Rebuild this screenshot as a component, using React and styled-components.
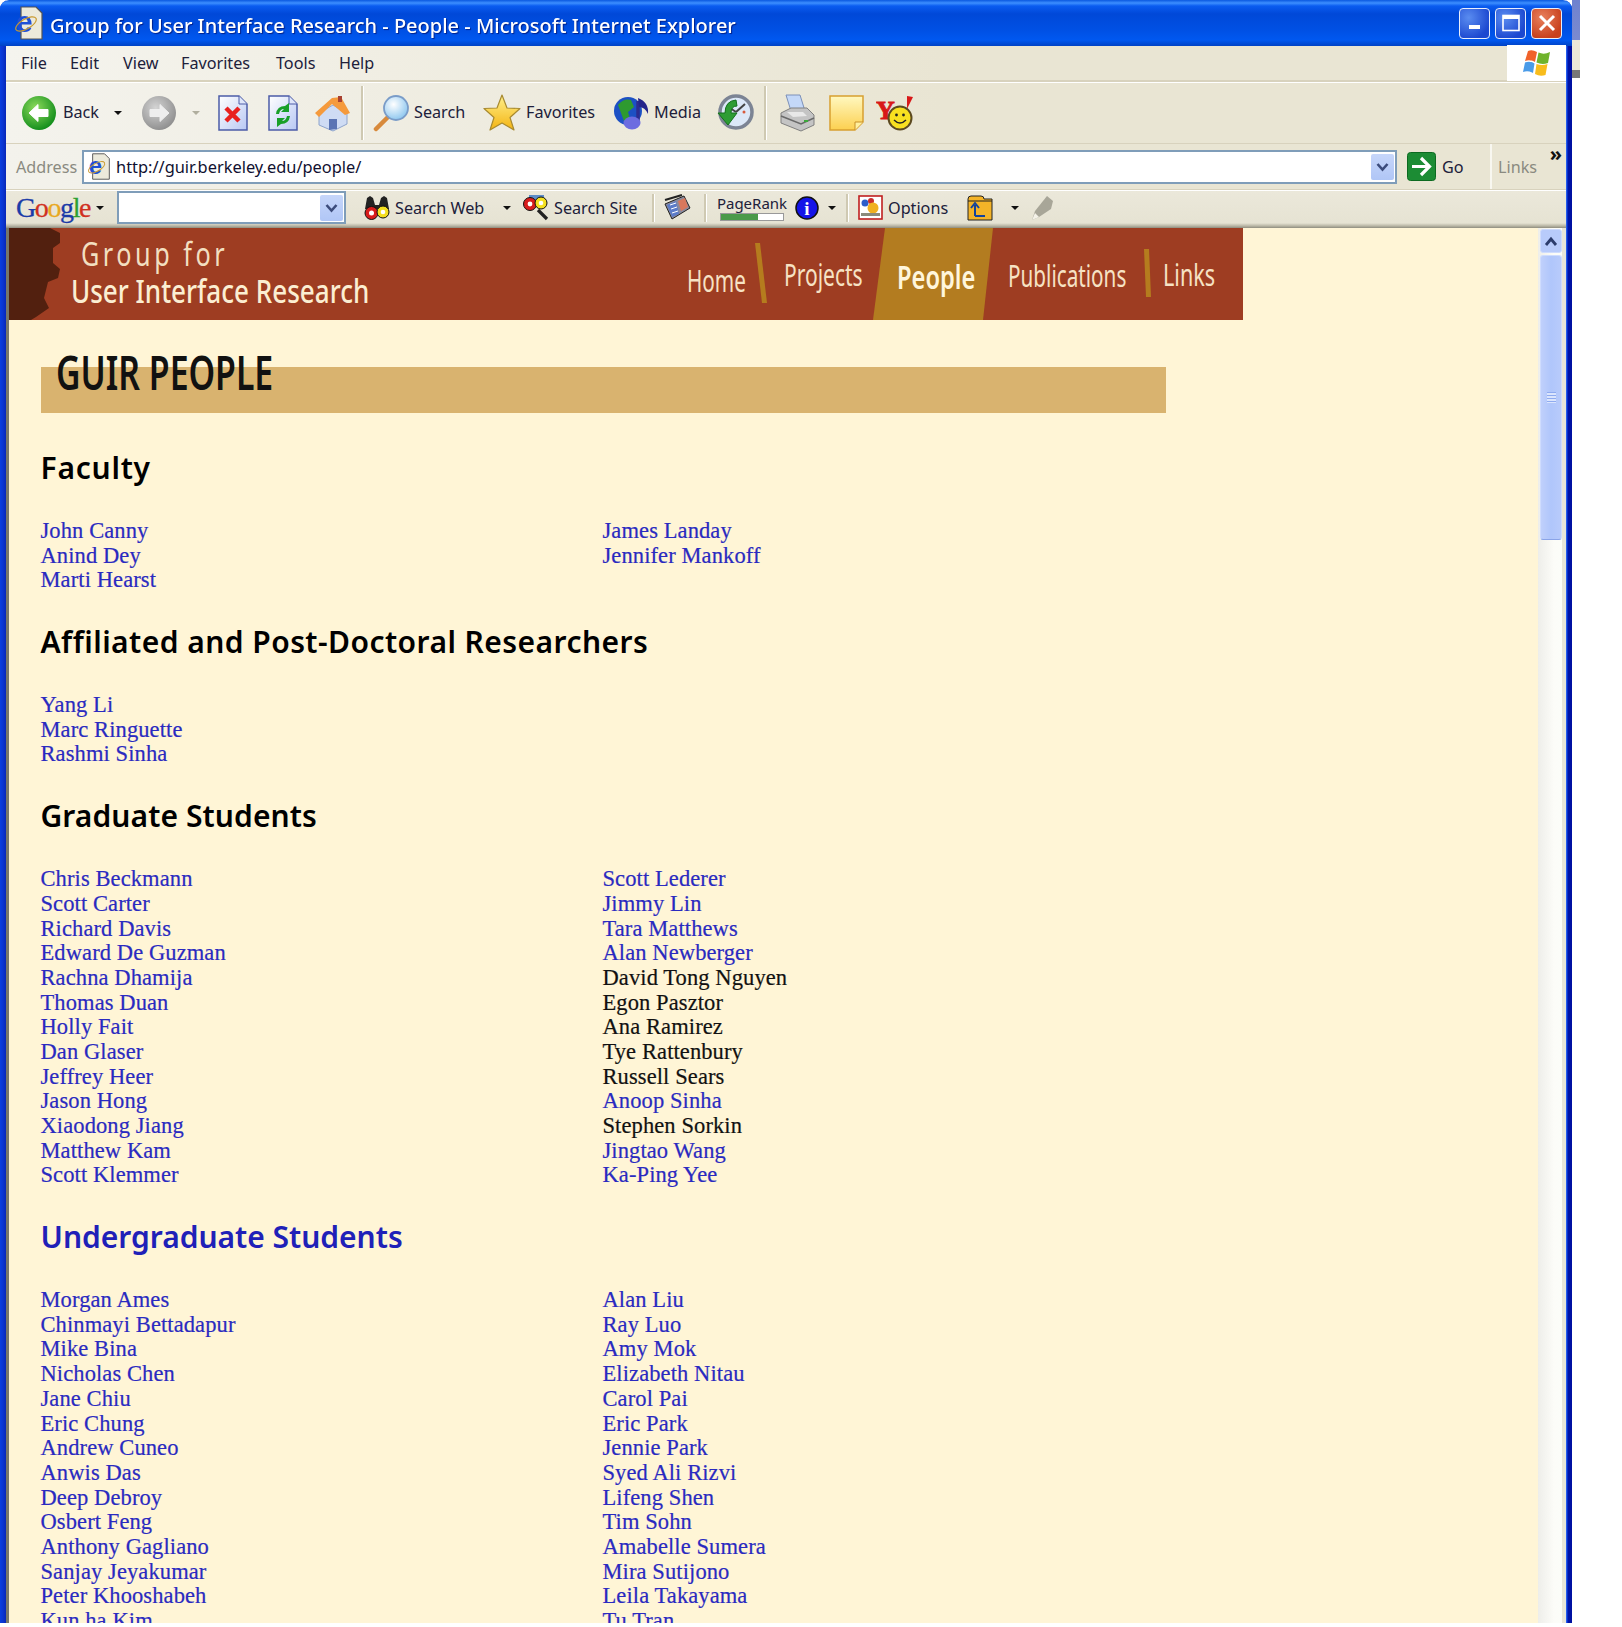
import React from 'react'
import styled, { createGlobalStyle } from 'styled-components'

const GlobalStyle = createGlobalStyle`
  html, body { margin: 0; padding: 0; background: #fff; }
`

const UI_FONT = '"Noto Sans", "Open Sans", sans-serif'

const faculty = [
  ['John Canny', 'Anind Dey', 'Marti Hearst'],
  ['James Landay', 'Jennifer Mankoff'],
]
const affiliated = [['Yang Li', 'Marc Ringuette', 'Rashmi Sinha'], []]
const graduates = [
  ['Chris Beckmann', 'Scott Carter', 'Richard Davis', 'Edward De Guzman', 'Rachna Dhamija', 'Thomas Duan', 'Holly Fait', 'Dan Glaser', 'Jeffrey Heer', 'Jason Hong', 'Xiaodong Jiang', 'Matthew Kam', 'Scott Klemmer'],
  ['Scott Lederer', 'Jimmy Lin', 'Tara Matthews', 'Alan Newberger', 'David Tong Nguyen', 'Egon Pasztor', 'Ana Ramirez', 'Tye Rattenbury', 'Russell Sears', 'Anoop Sinha', 'Stephen Sorkin', 'Jingtao Wang', 'Ka-Ping Yee'],
]
const undergrads = [
  ['Morgan Ames', 'Chinmayi Bettadapur', 'Mike Bina', 'Nicholas Chen', 'Jane Chiu', 'Eric Chung', 'Andrew Cuneo', 'Anwis Das', 'Deep Debroy', 'Osbert Feng', 'Anthony Gagliano', 'Sanjay Jeyakumar', 'Peter Khooshabeh', 'Kun ha Kim'],
  ['Alan Liu', 'Ray Luo', 'Amy Mok', 'Elizabeth Nitau', 'Carol Pai', 'Eric Park', 'Jennie Park', 'Syed Ali Rizvi', 'Lifeng Shen', 'Tim Sohn', 'Amabelle Sumera', 'Mira Sutijono', 'Leila Takayama', 'Tu Tran'],
]
// people without a home page are plain text on the real page
const noLink = ['David Tong Nguyen', 'Egon Pasztor', 'Ana Ramirez', 'Tye Rattenbury', 'Russell Sears', 'Stephen Sorkin']

const Desktop = styled.div`
  width: 1622px;
  height: 1627px;
  display: flex;
  align-items: flex-start;
  overflow: hidden;
  background: #fff;
`
const Window = styled.div`
  width: 1572px;
  height: 1623px;
  display: flex;
  flex-direction: column;
  overflow: hidden;
  border-radius: 9px 9px 0 0;
  filter: blur(0.45px);
  background:
    linear-gradient(90deg, #0a3fe0 0, #0a35d0 3px, #0828b8 6px, transparent 6px),
    linear-gradient(270deg, #0010a0 0, #0014a8 4px, #1048e8 5px, #3a70f0 6px, transparent 6px);
`
const Sliver = styled.div`
  width: 8px;
  height: 80px;
  background: linear-gradient(180deg, #6f82cf 0, #7a8ad0 40px, #ece9d8 40px, #ece9d8 70px, #777 70px, #777 78px, #fff 78px);
`
const TitleBar = styled.div`
  height: 46px;
  flex: none;
  display: flex;
  align-items: center;
  padding-left: 15px;
  background: linear-gradient(180deg, #0a58e0 0, #3d8fff 3px, #0a5cf0 6px, #0048d8 14px, #0050e4 30px, #0058f0 40px, #0042c4 46px);
`
const TitleText = styled.span`
  margin: 4px 0 0 7px;
  font: 500 20px ${UI_FONT};
  color: #fff;
  white-space: nowrap;
  text-shadow: 1px 1px 1px #00208a;
`
const WinButtons = styled.div`
  margin-left: auto;
  margin-right: 10px;
  display: flex;
  gap: 5px;
`
const WinButton = styled.div`
  width: 31px;
  height: 31px;
  box-sizing: border-box;
  border: 1.5px solid #e8eefc;
  border-radius: 4px;
  display: flex;
  align-items: center;
  justify-content: center;
  background: ${p => p.$close
    ? 'radial-gradient(circle at 35% 30%, #e8805c, #c8401c 75%)'
    : 'radial-gradient(circle at 30% 30%, #5a8cf0, #1c48d0 75%)'};
`
const Chrome = styled.div`
  flex: 1;
  min-height: 0;
  margin: 0 6px;
  display: flex;
  flex-direction: column;
`
const MenuBar = styled.div`
  height: 34px;
  flex: none;
  display: flex;
  align-items: center;
  border-bottom: 2px solid #d8d2bd;
  background: linear-gradient(90deg, #f5f4ee, #e9e5d3 60%);
`
const MenuItems = styled.div`
  flex: 1;
  display: flex;
  padding-left: 15px;
`
const MenuItem = styled.span`
  width: ${p => p.$w}px;
  font: 16.2px ${UI_FONT};
  color: #20203a;
`
const FlagBox = styled.div`
  width: 59px;
  height: 36px;
  display: flex;
  align-items: center;
  justify-content: center;
  background: #fff;
`
const ToolBar = styled.div`
  height: 60px;
  flex: none;
  display: flex;
  align-items: center;
  border-top: 1px solid #fff;
  border-bottom: 1px solid #d8d2bd;
  background: linear-gradient(90deg, #f4f3ed, #e9e5d3 60%);
`
const Slot = styled.div`
  flex: none;
  margin-left: ${p => p.$ml || 0}px;
  display: flex;
  align-items: center;
`
const Label = styled.span`
  flex: none;
  width: ${p => p.$w}px;
  margin-left: ${p => p.$ml || 0}px;
  font: ${p => p.$size || 16.2}px ${UI_FONT};
  color: ${p => p.$color || '#20203a'};
  white-space: nowrap;
`
const ToolLabel = styled(Label)`
  margin-bottom: 3px;
`
const Caret = styled.span`
  flex: none;
  width: 0;
  height: 0;
  margin-left: ${p => p.$ml || 0}px;
  border-left: 4px solid transparent;
  border-right: 4px solid transparent;
  border-top: 4px solid ${p => p.$off ? '#b0ae9e' : '#111'};
`
const Separator = styled.span`
  flex: none;
  width: 2px;
  height: ${p => p.$h}px;
  margin-left: ${p => p.$ml || 0}px;
  background: #cfc9b2;
  border-right: 1px solid #fff;
`
const AddressBar = styled.div`
  height: 45px;
  flex: none;
  display: flex;
  align-items: center;
  border-bottom: 1px solid #d8d2bd;
  background: linear-gradient(90deg, #f3f2ec, #e9e5d3 60%);
`
const Field = styled.div`
  flex: none;
  width: ${p => p.$w}px;
  height: ${p => p.$h}px;
  margin-left: ${p => p.$ml || 0}px;
  box-sizing: border-box;
  display: flex;
  align-items: center;
  border: 2px solid #7f9db9;
  background: #fff;
`
const FieldText = styled.span`
  margin-left: 5px;
  font: 16.4px ${UI_FONT};
  color: #101030;
`
const DropButton = styled.div`
  margin-left: auto;
  margin-right: 1px;
  width: 23px;
  height: 26px;
  display: flex;
  align-items: center;
  justify-content: center;
  border-radius: 2px;
  background: linear-gradient(180deg, #c6d6fa, #b0c6f6);
`
const LinksBox = styled.div`
  position: relative;
  flex: 1;
  align-self: stretch;
  margin-left: 24px;
  display: flex;
  align-items: center;
  border-left: 2px solid #f8f7f0;
`
const More = styled.span`
  position: absolute;
  top: -4px;
  right: 4px;
  font: 700 20px ${UI_FONT};
  color: #111;
`
const GoogleBar = styled.div`
  height: 38px;
  flex: none;
  display: flex;
  align-items: center;
  padding-bottom: 4px;
  box-sizing: border-box;
  border-top: 1px solid #fff;
  background: linear-gradient(180deg, #ebe8da 0, #e6e3d3 32px, #b8b5a4 35px, #8e8c7e 37px);
`
const GoogleLogo = styled.span`
  flex: none;
  width: 74px;
  margin-left: 10px;
  font: 28px "Liberation Serif", serif;
  letter-spacing: -1.4px;
  -webkit-text-stroke: 0.3px;
`
const Letter = styled.span`
  color: ${p => p.$c};
`
const RankBox = styled.div`
  flex: none;
  width: 68px;
  margin-left: ${p => p.$ml}px;
  display: flex;
  flex-direction: column;
  align-items: center;
  gap: 1px;
`
const RankText = styled.span`
  font: 15px/17px ${UI_FONT};
  color: #20203a;
`
const RankBar = styled.div`
  width: 62px;
  height: 6px;
  border: 1px solid #999;
  background: linear-gradient(90deg, #4a9a4a 60%, #fff 60%);
`
const Page = styled.div`
  flex: 1;
  min-height: 0;
  display: flex;
  border-left: 3px solid #77776a;
  background: #fff5d6;
`
const Content = styled.div`
  flex: 1;
  min-width: 0;
  overflow: hidden;
`
const Banner = styled.div`
  width: 1234px;
  height: 92px;
  display: flex;
  background: #9e3d22;
`
const Brand = styled.div`
  margin-left: 11px;
  display: flex;
  flex-direction: column;
`
const Squeeze = styled.span`
  display: inline-block;
  white-space: nowrap;
  transform-origin: left center;
  transform: scaleX(${p => p.$x});
`
const BrandTop = styled.div`
  margin: 9px 0 0 10px;
  height: 34px;
  font: 33px/34px ${UI_FONT};
  letter-spacing: 4.6px;
  color: #f2dfc0;
`
const BrandBottom = styled.div`
  height: 40px;
  font: 500 33px/40px ${UI_FONT};
  color: #fbeed2;
`
const Nav = styled.nav`
  margin-left: auto;
  margin-right: 29px;
  display: flex;
  align-items: flex-start;
`
const NavItem = styled.div`
  flex: none;
  width: ${p => p.$w}px;
  margin: ${p => p.$top}px 0 0 ${p => p.$ml}px;
  font: 30px/36px ${UI_FONT};
  color: #f6e2c4;
`
const Slash = styled.div`
  flex: none;
  width: ${p => p.$w}px;
  height: ${p => p.$h}px;
  margin: ${p => p.$top}px 0 0 ${p => p.$ml}px;
  background: #b57c1e;
  clip-path: polygon(0 0, ${p => p.$tw}px 0, 100% 100%, ${p => p.$bx}px 100%);
`
const PeopleTab = styled.div`
  flex: none;
  width: 120px;
  height: 92px;
  margin-left: 11px;
  padding: 31px 0 0 24px;
  box-sizing: border-box;
  font: 600 32px/36px ${UI_FONT};
  color: #fff6dc;
  background: #b37c20;
  clip-path: polygon(12px 0, 100% 0, 110px 100%, 0 100%);
`
const PageTitle = styled.div`
  width: 1125px;
  height: 46px;
  margin: 47px 0 0 32px;
  background: #d9b36f;
`
const PageTitleText = styled.h1`
  margin: 0 0 0 15px;
  position: relative;
  top: -22px;
  font: 600 46px/54px ${UI_FONT};
  color: #111;
`
const Section = styled.section`
  margin: ${p => p.$first ? 35 : 29}px 0 0 31.5px;
`
const Heading = styled.h2`
  margin: 0 0 31px;
  font: 600 30px/40px ${UI_FONT};
  letter-spacing: ${p => p.$ls}px;
  color: ${p => p.$link ? '#2020b8' : '#000'};
`
const Columns = styled.div`
  display: grid;
  grid-template-columns: 562px 1fr;
`
const Names = styled.div`
  display: flex;
  flex-direction: column;
`
const Person = styled.div`
  height: 24.7px;
  font: 22.5px/24.7px "Liberation Serif", serif;
  letter-spacing: 0.1px;
  -webkit-text-stroke: 0.2px;
  white-space: nowrap;
  color: #111;
`
const PersonLink = styled.a`
  color: #2a2ac0;
  text-decoration: none;
`
const ScrollBar = styled.div`
  width: 28px;
  flex: none;
  box-sizing: border-box;
  padding: 1px 0 0 2px;
  display: flex;
  flex-direction: column;
  background: linear-gradient(90deg, #eeeeea 0, #fcfcf8 16px, #fcfdf9 24px, #e8e6d8 24px);
`
const ScrollUp = styled.div`
  width: 22px;
  height: 24px;
  display: flex;
  align-items: center;
  justify-content: center;
  border-radius: 3px;
  border: 1px solid #cfdcfd;
  box-sizing: border-box;
  background: #b8cbfb;
`
const Thumb = styled.div`
  width: 22px;
  height: 285px;
  margin-top: 2px;
  box-sizing: border-box;
  display: flex;
  align-items: center;
  justify-content: center;
  border-radius: 3px;
  border: 1px solid #cfdcfd;
  border-bottom-color: #8aa4e8;
  background: linear-gradient(90deg, #c0d0fb, #b0c6fb 50%, #b8cbfb);
`
const Grip = styled.div`
  width: 9px;
  height: 11px;
  background: repeating-linear-gradient(180deg, #8fabf0 0, #8fabf0 1px, #dbe5fd 1px, #dbe5fd 3px);
`

function RoundArrow({ id, light, dark, arrow, flip }) {
  return (
    <svg width="36" height="36" viewBox="0 0 36 36">
      <defs>
        <radialGradient id={id} cx="40%" cy="35%" r="70%">
          <stop offset="0" stopColor={light} />
          <stop offset="1" stopColor={dark} />
        </radialGradient>
      </defs>
      <circle cx="18" cy="18" r="17" fill={`url(#${id})`} />
      <path
        transform={flip ? 'translate(36 0) scale(-1 1)' : undefined}
        d="M8 18 L17 9.5 V14.5 H27 V21.5 H17 V26.5 Z"
        fill={arrow}
        stroke={arrow}
        strokeLinejoin="round"
      />
    </svg>
  )
}

function Doc({ id, w = 30, h = 36, children }) {
  return (
    <svg width={w} height={h} viewBox="0 0 30 36">
      <defs>
        <linearGradient id={id} x1="0" y1="0" x2="1" y2="1">
          <stop offset="0" stopColor="#ffffff" />
          <stop offset="1" stopColor="#b8c8f4" />
        </linearGradient>
      </defs>
      <path d="M1 1 H21 L29 9 V35 H1 Z" fill={`url(#${id})`} stroke="#4c5ca8" strokeWidth="1.5" />
      <path d="M21 1 V9 H29" fill="#dfe6fa" stroke="#4c5ca8" />
      {children}
    </svg>
  )
}

function IeDoc({ w, h }) {
  return (
    <svg width={w} height={h} viewBox="0 0 28 34">
      <path d="M6 1 H21 L27 7 V33 H6 Z" fill="#eceadb" stroke="#555" strokeWidth="1.2" />
      <text x="1" y="26" fontFamily="Liberation Sans" fontWeight="700" fontSize="30" fill="#1e50d8">e</text>
      <ellipse cx="11" cy="18" rx="11.5" ry="5" fill="none" stroke="#c89a30" strokeWidth="1.2" transform="rotate(-30 11 18)" />
    </svg>
  )
}

function Flag() {
  return (
    <svg width="30" height="30" viewBox="0 0 30 30">
      <path d="M6 3 Q10 1 15 4 L13 14 Q8 11 3 13 Z" fill="#f0622a" />
      <path d="M16.5 4.5 Q22 7 28 4 L26 15 Q20 17 14.5 14.5 Z" fill="#6fb32c" />
      <path d="M3 14.5 Q8 12.5 12.5 15.5 L11 25 Q6 22 1 24 Z" fill="#4a9be8" />
      <path d="M14.5 16 Q20 18 25.5 16 L23.5 27 Q18 29 13 26 Z" fill="#f8bc1c" />
    </svg>
  )
}

function Home() {
  return (
    <svg width="37" height="37" viewBox="0 0 37 37">
      <path d="M5 18 L19 10 L33 18 V29 L19 36 L5 30 Z" fill="#cfdcf4" stroke="#8ea4cc" />
      <path d="M15 35 V24 H23 V34 Z" fill="#5a74b4" />
      <path d="M1 18 L18 3 L27 2 L36 18 L31 20 L18 9 L5 22 Z" fill="#f59a3c" />
      <rect x="24" y="1" width="4" height="6" fill="#a84030" />
    </svg>
  )
}

function SearchGlass() {
  return (
    <svg width="37" height="37" viewBox="0 0 37 37">
      <defs>
        <radialGradient id="lens" cx="40%" cy="35%" r="70%">
          <stop offset="0" stopColor="#ffffff" />
          <stop offset="1" stopColor="#88c4ee" />
        </radialGradient>
      </defs>
      <path d="M14 23 L3 34" stroke="#d88a3c" strokeWidth="4.5" strokeLinecap="round" />
      <circle cx="23" cy="13" r="12" fill="url(#lens)" stroke="#7a9cc8" strokeWidth="1.8" />
    </svg>
  )
}

function Star() {
  return (
    <svg width="38" height="38" viewBox="0 0 38 38">
      <defs>
        <linearGradient id="star" x1="0" y1="0" x2="0" y2="1">
          <stop offset="0" stopColor="#fff08c" />
          <stop offset="1" stopColor="#f4b412" />
        </linearGradient>
      </defs>
      <path d="M19 1 L24 14 L37 14.5 L27 23.5 L31 36 L19 29 L7 36 L11 23.5 L1 14.5 L14 14 Z" fill="url(#star)" stroke="#a88a30" strokeWidth="1.2" strokeLinejoin="round" />
    </svg>
  )
}

function Media() {
  return (
    <svg width="36" height="36" viewBox="0 0 36 36">
      <circle cx="14" cy="16" r="14" fill="#1c50c4" />
      <path d="M4 10 Q10 3 17 5 L20 12 L14 17 L16 24 L10 26 L7 18 Z" fill="#2e9a30" />
      <path d="M24 6 V27" stroke="#2c2c90" strokeWidth="3.5" />
      <path d="M24 3 Q35 7 34 19 Q31 12 25 12 Z" fill="#24248a" />
      <ellipse cx="18" cy="28" rx="8.5" ry="6.5" fill="#6c6ce0" />
    </svg>
  )
}

function History() {
  return (
    <svg width="38" height="38" viewBox="0 0 38 38">
      <circle cx="20" cy="18" r="16" fill="#dce8f8" stroke="#7c8494" strokeWidth="3.5" />
      <path d="M20 18 L29 10 M20 18 L14 14" stroke="#444" strokeWidth="2" />
      <circle cx="28" cy="18" r="1.5" fill="#d85a3c" />
      <path d="M20 6 Q9 7 9 19 H2 L12 31 L21 19 H15 Q15 12 21 12 Z" fill="#2e9c34" stroke="#14701c" />
    </svg>
  )
}

function Printer() {
  return (
    <svg width="37" height="38" viewBox="0 0 37 38">
      <path d="M7 1 H21 L26 17 H12 Z" fill="#c4d8f8" stroke="#7c90b8" />
      <path d="M2 19 L12 14 H28 L35 21 V31 L22 37 L2 29 Z" fill="#c4c4c4" stroke="#808080" />
      <path d="M2 22 L22 30 L35 24" fill="none" stroke="#6a6a6a" strokeWidth="1.6" />
      <path d="M8 18 L24 18 L28 22 L14 23 Z" fill="#e8e8e8" />
      <rect x="25" y="26" width="4" height="2" fill="#3ca83c" />
    </svg>
  )
}

function Note() {
  return (
    <svg width="35" height="36" viewBox="0 0 35 36">
      <defs>
        <linearGradient id="note" x1="0" y1="0" x2="0" y2="1">
          <stop offset="0" stopColor="#fff8c0" />
          <stop offset="1" stopColor="#fcd050" />
        </linearGradient>
      </defs>
      <path d="M1 1 H34 V27 L26 35 H1 Z" fill="url(#note)" stroke="#d8a030" strokeWidth="1.5" />
      <path d="M26 35 V27 H34" fill="#fff0a0" stroke="#c89028" />
    </svg>
  )
}

function YahooFace() {
  return (
    <svg width="38" height="36" viewBox="0 0 38 36">
      <text x="0" y="24" fontFamily="Liberation Serif" fontWeight="700" fontSize="26" fill="#d81818" stroke="#d81818" strokeWidth="0.9">Y</text>
      <path d="M31 1 L37 2 L31 14 Z" fill="#d81818" />
      <circle cx="24" cy="23" r="11.5" fill="#f8e020" stroke="#5c4a20" strokeWidth="2" />
      <circle cx="20.5" cy="20" r="1.4" fill="#222" />
      <circle cx="27.5" cy="20" r="1.4" fill="#222" />
      <path d="M18 25 Q24 31 30 25" fill="none" stroke="#222" strokeWidth="1.4" />
    </svg>
  )
}

function GoArrow() {
  return (
    <svg width="29" height="29" viewBox="0 0 29 29">
      <rect x="0.5" y="0.5" width="28" height="28" rx="3" fill="#1c8c34" stroke="#0c6a20" />
      <path d="M5 14.5 H21 M14 6 L22.5 14.5 L14 23" fill="none" stroke="#fff" strokeWidth="3.2" />
    </svg>
  )
}

function Chevron() {
  return (
    <svg width="13" height="10" viewBox="0 0 13 10">
      <path d="M1.5 2 L6.5 7.5 L11.5 2" fill="none" stroke="#3c4c7c" strokeWidth="2.6" />
    </svg>
  )
}

function Binoculars() {
  return (
    <svg width="26" height="26" viewBox="0 0 26 26">
      <path d="M3 3 L6 1 L9 3 L11 10 H15 L17 3 L20 1 L23 3 L25 14 H1 Z" fill="#222" />
      <circle cx="7.5" cy="18" r="6.5" fill="#d81c1c" stroke="#111" />
      <circle cx="7.5" cy="18" r="2.5" fill="#fff" />
      <circle cx="19" cy="17" r="6" fill="#f4e020" stroke="#111" />
      <circle cx="19" cy="17" r="2.3" fill="#fff" />
    </svg>
  )
}

function SiteSearch() {
  return (
    <svg width="27" height="27" viewBox="0 0 27 27">
      <rect x="6" y="1" width="15" height="8" fill="#5c8cc8" />
      <circle cx="7" cy="10" r="6.5" fill="#d81c1c" stroke="#111" />
      <circle cx="7" cy="10" r="2.4" fill="#fff" />
      <circle cx="18" cy="9" r="6" fill="#f4e020" stroke="#111" />
      <circle cx="18" cy="9" r="2.3" fill="#fff" />
      <path d="M15 16 L24 25" stroke="#222" strokeWidth="3.2" />
    </svg>
  )
}

function NewsBook() {
  return (
    <svg width="27" height="27" viewBox="0 0 27 27">
      <path d="M1 10 L20 2 L26 14 L8 25 Z" fill="#8a8a9c" stroke="#222" />
      <path d="M3 11 L12 7 L15 20 L8 23 Z" fill="#5c7cc8" />
      <path d="M14 7 L21 4 L24 13 L17 17 Z" fill="#d8785c" />
      <path d="M6 11 L12 9 M7 15 L13 13 M8 19 L14 17" stroke="#fff" />
      <path d="M1 6 L18 1" stroke="#222" strokeWidth="2" />
    </svg>
  )
}

function InfoBadge() {
  return (
    <svg width="24" height="24" viewBox="0 0 24 24">
      <circle cx="12" cy="12" r="11" fill="#1414e8" stroke="#111" strokeWidth="1.5" />
      <text x="12" y="19" textAnchor="middle" fontFamily="Liberation Serif" fontWeight="700" fontSize="19" fill="#fff">i</text>
    </svg>
  )
}

function OptionsBox() {
  return (
    <svg width="25" height="25" viewBox="0 0 25 25">
      <rect x="1" y="1" width="23" height="23" fill="#fff" stroke="#c02020" strokeWidth="1.6" />
      <circle cx="7" cy="8" r="3.5" fill="#2c5cc8" />
      <circle cx="13" cy="6" r="3" fill="#c82c2c" />
      <circle cx="15" cy="13" r="5.5" fill="#f0b020" />
      <rect x="3" y="18" width="19" height="3" fill="#8a8a7c" />
    </svg>
  )
}

function UpFolder() {
  return (
    <svg width="26" height="26" viewBox="0 0 26 26">
      <path d="M1 4 Q1 1 4 1 H14 Q17 1 17 4 H25 V25 H1 Z" fill="#f4b428" stroke="#222" />
      <path d="M1 6 H25" stroke="#222" />
      <path d="M8 21 V10 M4 13 L8 8 L12 13 M8 21 H18" fill="none" stroke="#14449c" strokeWidth="2" />
    </svg>
  )
}

function Pen() {
  return (
    <svg width="24" height="26" viewBox="0 0 24 26">
      <path d="M17 1 L23 6 L21 14 L9 22 L2 25 L5 16 Z" fill="#a8a698" />
      <path d="M2 25 L9 22 L5 18 Z" fill="#f4f2e8" />
    </svg>
  )
}

function PersonList({ names }) {
  return (
    <Names>
      {names.map(name => (
        <Person key={name}>
          {noLink.includes(name) ? name : <PersonLink href="#">{name}</PersonLink>}
        </Person>
      ))}
    </Names>
  )
}

function PeopleSection({ title, columns, first, link, ls }) {
  return (
    <Section $first={first}>
      <Heading $link={link} $ls={ls}>{title}</Heading>
      <Columns>
        <PersonList names={columns[0]} />
        <PersonList names={columns[1]} />
      </Columns>
    </Section>
  )
}

export default function App() {
  return (
    <>
      <GlobalStyle />
      <Desktop>
        <Window>
          <TitleBar>
            <IeDoc w={28} h={34} />
            <TitleText>Group for User Interface Research - People - Microsoft Internet Explorer</TitleText>
            <WinButtons>
              <WinButton>
                <svg width="16" height="16" viewBox="0 0 16 16"><rect x="2" y="10" width="11" height="4" fill="#fff" /></svg>
              </WinButton>
              <WinButton>
                <svg width="18" height="18" viewBox="0 0 18 18"><rect x="1" y="1.5" width="16" height="15" fill="none" stroke="#fff" strokeWidth="1.6" /><rect x="1" y="1" width="16" height="4" fill="#fff" /></svg>
              </WinButton>
              <WinButton $close>
                <svg width="18" height="18" viewBox="0 0 18 18"><path d="M2 2 L16 16 M16 2 L2 16" stroke="#fff" strokeWidth="3" /></svg>
              </WinButton>
            </WinButtons>
          </TitleBar>

          <Chrome>
            <MenuBar>
              <MenuItems>
                <MenuItem $w={49}>File</MenuItem>
                <MenuItem $w={53}>Edit</MenuItem>
                <MenuItem $w={58}>View</MenuItem>
                <MenuItem $w={95}>Favorites</MenuItem>
                <MenuItem $w={63}>Tools</MenuItem>
                <MenuItem $w={50}>Help</MenuItem>
              </MenuItems>
              <FlagBox><Flag /></FlagBox>
            </MenuBar>

            <ToolBar>
              <Slot $ml={15}><RoundArrow id="back" light="#8edb5c" dark="#0c8a18" arrow="#fff" /></Slot>
              <ToolLabel $ml={6} $w={36}>Back</ToolLabel>
              <Caret $ml={15} />
              <Slot $ml={19}><RoundArrow id="fwd" light="#d4d4d4" dark="#8c8c8c" arrow="#eee" flip /></Slot>
              <Caret $ml={15} $off />
              <Slot $ml={18}>
                <Doc id="stop">
                  <path d="M8 13 L21 26 M21 13 L8 26" stroke="#e82020" strokeWidth="4.5" />
                </Doc>
              </Slot>
              <Slot $ml={20}>
                <Doc id="refresh">
                  <path d="M8 19 Q9 11 17 11 L21 8 V17 H13 L16 14 Q12 14 11 19 Z M22 21 Q21 29 13 29 L9 32 V23 H17 L14 26 Q18 26 19 21 Z" fill="#18a028" />
                </Doc>
              </Slot>
              <Slot $ml={16}><Home /></Slot>
              <Separator $ml={10} $h={54} />
              <Slot $ml={9}><SearchGlass /></Slot>
              <ToolLabel $ml={4} $w={50}>Search</ToolLabel>
              <Slot $ml={19}><Star /></Slot>
              <ToolLabel $ml={5} $w={70}>Favorites</ToolLabel>
              <Slot $ml={18}><Media /></Slot>
              <ToolLabel $ml={4} $w={44}>Media</ToolLabel>
              <Slot $ml={18}><History /></Slot>
              <Separator $ml={10} $h={54} />
              <Slot $ml={12}><Printer /></Slot>
              <Slot $ml={13}><Note /></Slot>
              <Slot $ml={12}><YahooFace /></Slot>
            </ToolBar>

            <AddressBar>
              <Label $ml={10} $w={60} $color="#8a8a80">Address</Label>
              <Field $ml={6} $w={1315} $h={34}>
                <Slot $ml={3}><IeDoc w={24} h={27} /></Slot>
                <FieldText>http://guir.berkeley.edu/people/</FieldText>
                <DropButton><Chevron /></DropButton>
              </Field>
              <Slot $ml={10}><GoArrow /></Slot>
              <Label $ml={6} $w={24}>Go</Label>
              <LinksBox>
                <Label $ml={6} $w={36} $color="#8a8a80">Links</Label>
                <More>»</More>
              </LinksBox>
            </AddressBar>

            <GoogleBar>
              <GoogleLogo>
                <Letter $c="#1c3ca8">G</Letter>
                <Letter $c="#d03020">o</Letter>
                <Letter $c="#e8a820">o</Letter>
                <Letter $c="#1c3ca8">g</Letter>
                <Letter $c="#30a030">l</Letter>
                <Letter $c="#d03020">e</Letter>
              </GoogleLogo>
              <Caret $ml={6} />
              <Field $ml={13} $w={229} $h={33}>
                <DropButton><Chevron /></DropButton>
              </Field>
              <Slot $ml={18}><Binoculars /></Slot>
              <Label $ml={5} $w={86}>Search Web</Label>
              <Caret $ml={22} />
              <Slot $ml={12}><SiteSearch /></Slot>
              <Label $ml={4} $w={84}>Search Site</Label>
              <Separator $ml={14} $h={28} />
              <Slot $ml={9}><NewsBook /></Slot>
              <Separator $ml={13} $h={28} />
              <RankBox $ml={11}>
                <RankText>PageRank</RankText>
                <RankBar />
              </RankBox>
              <Slot $ml={9}><InfoBadge /></Slot>
              <Caret $ml={9} />
              <Separator $ml={10} $h={28} />
              <Slot $ml={9}><OptionsBox /></Slot>
              <Label $ml={5} $w={58}>Options</Label>
              <Slot $ml={21}><UpFolder /></Slot>
              <Caret $ml={18} />
              <Slot $ml={11}><Pen /></Slot>
            </GoogleBar>

            <Page>
              <Content>
                <Banner>
                  <svg width="51" height="92" viewBox="0 0 51 92">
                    <path d="M0 0 H41 L51 5 V15 L44 20 V35 L51 41 L49 50 L39 54 L35 70 L40 80 L27 89 L22 92 H0 Z" fill="#52200f" />
                  </svg>
                  <Brand>
                    <BrandTop><Squeeze $x={0.764}>Group for</Squeeze></BrandTop>
                    <BrandBottom><Squeeze $x={0.789}>User Interface Research</Squeeze></BrandBottom>
                  </Brand>
                  <Nav>
                    <NavItem $w={58} $top={35} $ml={0}><Squeeze $x={0.69}>Home</Squeeze></NavItem>
                    <Slash $w={12} $h={60} $top={15} $ml={10} $tw={5} $bx={7} />
                    <NavItem $w={78} $top={29} $ml={17}><Squeeze $x={0.7}>Projects</Squeeze></NavItem>
                    <PeopleTab><Squeeze $x={0.74}>People</Squeeze></PeopleTab>
                    <NavItem $w={119} $top={30} $ml={15}><Squeeze $x={0.69}>Publications</Squeeze></NavItem>
                    <Slash $w={7} $h={48} $top={21} $ml={17} $tw={5} $bx={2} />
                    <NavItem $w={51} $top={29} $ml={12}><Squeeze $x={0.72}>Links</Squeeze></NavItem>
                  </Nav>
                </Banner>

                <PageTitle>
                  <PageTitleText><Squeeze $x={0.735}>GUIR PEOPLE</Squeeze></PageTitleText>
                </PageTitle>

                <PeopleSection first title="Faculty" columns={faculty} ls={0.75} />
                <PeopleSection title="Affiliated and Post-Doctoral Researchers" columns={affiliated} ls={0.45} />
                <PeopleSection title="Graduate Students" columns={graduates} ls={0.08} />
                <PeopleSection link title="Undergraduate Students" columns={undergrads} ls={-0.02} />
              </Content>
              <ScrollBar>
                <ScrollUp>
                  <svg width="14" height="11" viewBox="0 0 14 11"><path d="M2 9 L7 3 L12 9" fill="none" stroke="#2c3c6c" strokeWidth="2.8" /></svg>
                </ScrollUp>
                <Thumb><Grip /></Thumb>
              </ScrollBar>
            </Page>
          </Chrome>
        </Window>
        <Sliver />
      </Desktop>
    </>
  )
}
